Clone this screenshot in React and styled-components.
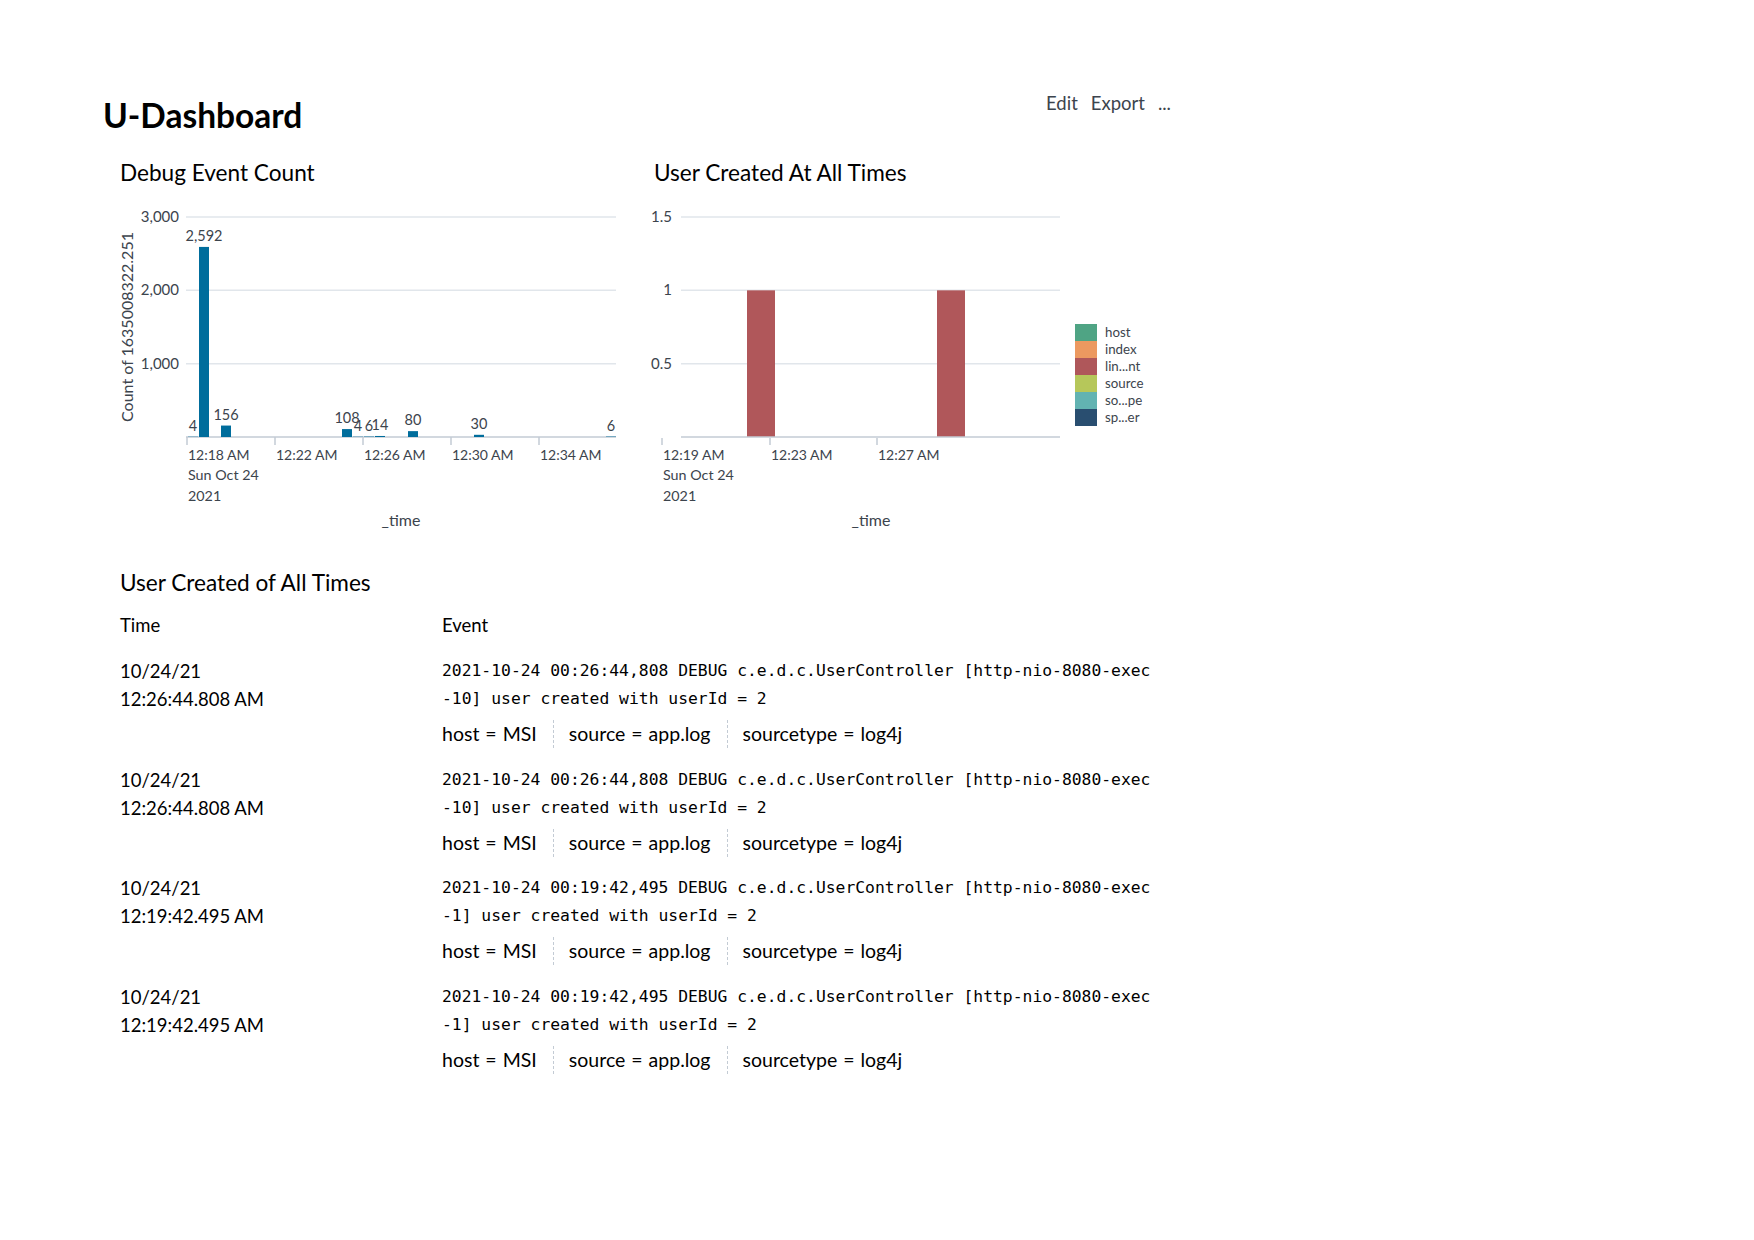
import React from "react";
import styled, { createGlobalStyle } from "styled-components";

const GlobalStyle = createGlobalStyle`
  body {
    margin: 0;
    background: #ffffff;
    color: #000000;
    font-family: Lato, "Open Sans", sans-serif;
  }
`;

const Page = styled.div`
  width: 1072px;
  padding: 95px 0 60px 103px;
`;

const Header = styled.header`
  display: flex;
  justify-content: space-between;
  align-items: flex-start;
`;

const Title = styled.h1`
  margin: 0;
  font-size: 33.5px;
  line-height: 40px;
  font-weight: 700;
`;

const Actions = styled.div`
  display: flex;
  gap: 13px;
  margin-top: -3px;
  margin-right: 4px;
  font-size: 18.5px;
  line-height: 22px;
  color: #3c444d;
`;

const Action = styled.span`
  cursor: pointer;
`;

const PanelRow = styled.div`
  display: flex;
  margin-top: 24px;
`;

const Panel = styled.section`
  width: ${(p) => p.$width || 534}px;
  padding-left: 17px;
  box-sizing: border-box;
  margin-top: ${(p) => p.$top || 0}px;
`;

const PanelTitle = styled.h2`
  margin: 0 0 ${(p) => p.$gap}px;
  font-size: 22.6px;
  line-height: 28px;
  font-weight: 400;
`;

const ChartSvg = styled.svg`
  display: block;
  overflow: visible;
`;

const ChartText = styled.text`
  font-family: Lato, "Open Sans", sans-serif;
  font-size: ${(p) => p.$size || 14}px;
  fill: #3c444d;
`;

const HeadRow = styled.div`
  display: grid;
  grid-template-columns: 322px 1fr;
  font-size: 18.5px;
  line-height: 28px;
  margin-bottom: 10px;
`;

const EventRow = styled.div`
  display: grid;
  grid-template-columns: 322px 1fr;
  padding: 8px 0 9.5px;
`;

const TimeCell = styled.div`
  font-size: 18.5px;
  line-height: 28px;
`;

const RawEvent = styled.div`
  width: 72ch;
  font-family: "DejaVu Sans Mono", "Liberation Mono", monospace;
  font-size: 16.35px;
  line-height: 28px;
  word-break: break-all;
`;

const Fields = styled.div`
  display: flex;
  margin-top: 7px;
  font-size: 19.5px;
  line-height: 28px;
  word-spacing: 1px;
`;

const Field = styled.span`
  ${(p) =>
    p.$sep &&
    `
    margin-left: 16px;
    padding-left: 15px;
    border-left: 1px dashed #c3cbd4;
  `}
`;

const BLUE = "#006d9c";
const RED = "#b0575a";
const GRID = "#e1e6eb";
const AXIS = "#c3cbd4";

const countBars = [
  { slot: 0, v: 4 },
  { slot: 1, v: 2592, label: "2,592" },
  { slot: 3, v: 156 },
  { slot: 14, v: 108 },
  { slot: 15, v: 4 },
  { slot: 16, v: 6 },
  { slot: 17, v: 14 },
  { slot: 20, v: 80 },
  { slot: 26, v: 30 },
  { slot: 38, v: 6 },
];

const countTicks = ["12:18 AM", "12:22 AM", "12:26 AM", "12:30 AM", "12:34 AM"];

const DebugCountChart = () => {
  const y = (v) => 236 - (v / 3000) * 220;
  return (
    <ChartSvg width="534" height="330">
      {[3000, 2000, 1000].map((v) => (
        <g key={v}>
          <line x1="66" x2="496" y1={y(v)} y2={y(v)} stroke={GRID} strokeWidth="1.5" />
          <ChartText x="59" y={y(v) + 5} textAnchor="end" $size={15}>
            {v.toLocaleString("en-US")}
          </ChartText>
        </g>
      ))}
      <line x1="66" x2="496" y1="236" y2="236" stroke={AXIS} strokeWidth="1.5" />
      {countTicks.map((t, i) => (
        <g key={t}>
          <line x1={67 + 88 * i} x2={67 + 88 * i} y1="236" y2="244" stroke={AXIS} strokeWidth="1.5" />
          <ChartText x={68 + 88 * i} y="259">{t}</ChartText>
        </g>
      ))}
      <ChartText x="68" y="279" $size={14.3}>Sun Oct 24</ChartText>
      <ChartText x="68" y="300" $size={14.3}>2021</ChartText>
      {countBars.map((b) => {
        const x = 67 + 11 * b.slot + 1;
        const top = y(b.v);
        return (
          <g key={b.slot}>
            <rect x={x} y={top} width="10" height={236 - top} fill={BLUE} />
            <ChartText x={x + 5} y={top - 6} textAnchor="middle" $size={14.5}>
              {b.label || b.v}
            </ChartText>
          </g>
        );
      })}
      <ChartText
        x="0"
        y="0"
        transform="translate(13 126) rotate(-90)"
        textAnchor="middle"
        $size={16}
      >
        Count of 1635008322.251
      </ChartText>
      <ChartText x="281" y="325" textAnchor="middle" $size={16}>
        _time
      </ChartText>
    </ChartSvg>
  );
};

const legend = [
  { name: "host", color: "#4fa484" },
  { name: "index", color: "#ec9960" },
  { name: "lin...nt", color: "#af575a" },
  { name: "source", color: "#b6c75a" },
  { name: "so...pe", color: "#62b3b2" },
  { name: "sp...er", color: "#294e70" },
];

const userTicks = [
  { x: 8, t: "12:19 AM" },
  { x: 116, t: "12:23 AM" },
  { x: 223, t: "12:27 AM" },
];

const UserCreatedChart = () => {
  const y = (v) => 236 - (v / 1.5) * 220;
  return (
    <ChartSvg width="534" height="330">
      {[
        [1.5, "1.5"],
        [1, "1"],
        [0.5, "0.5"],
      ].map(([v, l]) => (
        <g key={l}>
          <line x1="27" x2="406" y1={y(v)} y2={y(v)} stroke={GRID} strokeWidth="1.5" />
          <ChartText x="18" y={y(v) + 5} textAnchor="end" $size={15}>
            {l}
          </ChartText>
        </g>
      ))}
      {[93, 283].map((x) => (
        <rect key={x} x={x} y={y(1)} width="28" height={236 - y(1)} fill={RED} />
      ))}
      <line x1="27" x2="406" y1="236" y2="236" stroke={AXIS} strokeWidth="1.5" />
      {userTicks.map((k) => (
        <g key={k.t}>
          <line x1={k.x} x2={k.x} y1="237" y2="244" stroke={AXIS} strokeWidth="1.5" />
          <ChartText x={k.x + 1} y="259">{k.t}</ChartText>
        </g>
      ))}
      <ChartText x="9" y="279" $size={14.3}>Sun Oct 24</ChartText>
      <ChartText x="9" y="300" $size={14.3}>2021</ChartText>
      {legend.map((l, i) => (
        <g key={l.name}>
          <rect x="421" y={123 + 17 * i} width="22" height="17" fill={l.color} />
          <ChartText x="451" y={136 + 17 * i} $size={13.3}>
            {l.name}
          </ChartText>
        </g>
      ))}
      <ChartText x="217" y="325" textAnchor="middle" $size={16}>
        _time
      </ChartText>
    </ChartSvg>
  );
};

const events = [
  { date: "10/24/21", time: "12:26:44.808 AM", ts: "2021-10-24 00:26:44,808", exec: "10" },
  { date: "10/24/21", time: "12:26:44.808 AM", ts: "2021-10-24 00:26:44,808", exec: "10" },
  { date: "10/24/21", time: "12:19:42.495 AM", ts: "2021-10-24 00:19:42,495", exec: "1" },
  { date: "10/24/21", time: "12:19:42.495 AM", ts: "2021-10-24 00:19:42,495", exec: "1" },
];

const fields = ["host = MSI", "source = app.log", "sourcetype = log4j"];

const App = () => {
  return (
    <>
      <GlobalStyle />
      <Page>
        <Header>
          <Title>U-Dashboard</Title>
          <Actions>
            <Action>Edit</Action>
            <Action>Export</Action>
            <Action>...</Action>
          </Actions>
        </Header>

        <PanelRow>
          <Panel>
            <PanelTitle $gap={14}>Debug Event Count</PanelTitle>
            <DebugCountChart />
          </Panel>
          <Panel>
            <PanelTitle $gap={14}>User Created At All Times</PanelTitle>
            <UserCreatedChart />
          </Panel>
        </PanelRow>

        <Panel $width={1072} $top={38}>
          <PanelTitle $gap={14}>User Created of All Times</PanelTitle>
          <HeadRow>
            <span>Time</span>
            <span>Event</span>
          </HeadRow>
          {events.map((e, i) => (
            <EventRow key={i}>
              <TimeCell>
                {e.date}
                <br />
                {e.time}
              </TimeCell>
              <div>
                <RawEvent>
                  {`${e.ts} DEBUG c.e.d.c.UserController [http-nio-8080-exec-${e.exec}] user created with userId = 2`}
                </RawEvent>
                <Fields>
                  {fields.map((f, j) => (
                    <Field key={f} $sep={j > 0}>
                      {f}
                    </Field>
                  ))}
                </Fields>
              </div>
            </EventRow>
          ))}
        </Panel>
      </Page>
    </>
  );
};

export default App;
